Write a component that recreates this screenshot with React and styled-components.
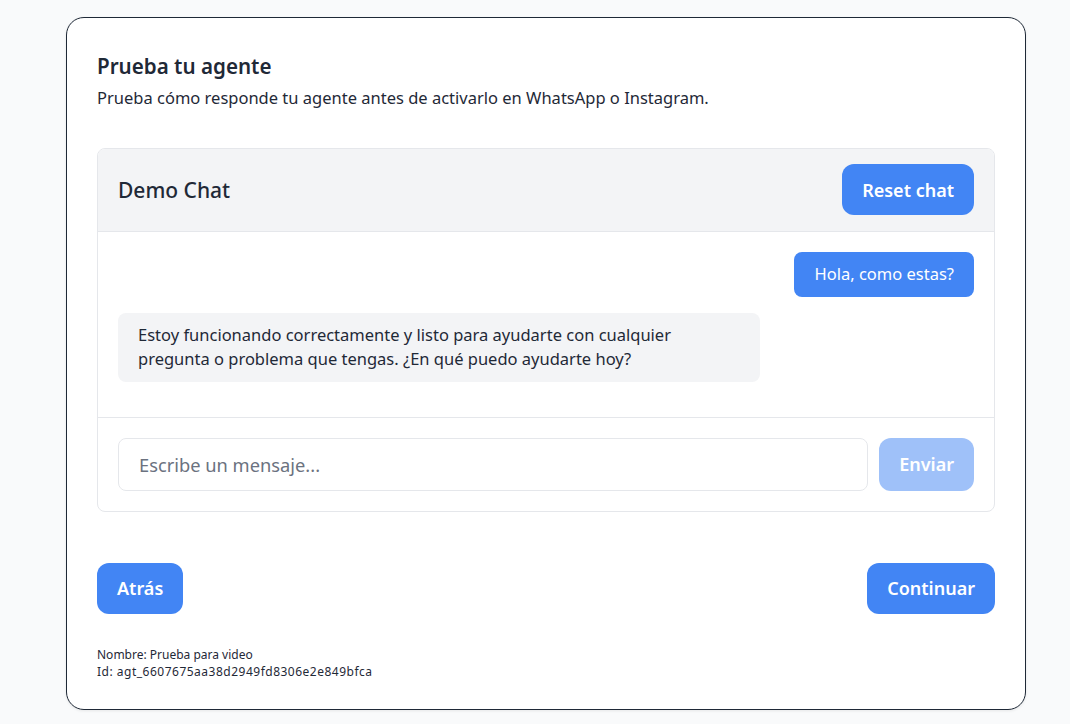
import React, { useState } from "react";
import styled, { createGlobalStyle } from "styled-components";

const Global = createGlobalStyle`
  html, body {
    margin: 0;
    padding: 0;
    background: #f9fafb;
    font-family: "Segoe UI", "Noto Sans", sans-serif;
    color: #1f2937;
  }
  * { box-sizing: border-box; }
`;

const Page = styled.div`
  padding: 17px 44px 14px 66px;
`;

const Card = styled.div`
  width: 960px;
  background: #fff;
  border: 1px solid #1f2937;
  border-radius: 18px;
  box-shadow: 0 1px 3px rgba(0, 0, 0, 0.08);
  padding: 30px 30px 29px;
`;

const Title = styled.h2`
  margin: 0;
  padding-top: 4px;
  font-size: 20.6px;
  font-weight: 600;
  line-height: 28px;
`;

const Subtitle = styled.p`
  margin: 6px 0 0;
  font-size: 16.5px;
  line-height: 24px;
`;

const ChatBox = styled.div`
  margin-top: 38px;
  border: 1px solid #e5e7eb;
  border-radius: 8px;
  overflow: hidden;
`;

const ChatHeader = styled.div`
  display: flex;
  justify-content: space-between;
  align-items: center;
  background: #f3f4f6;
  border-bottom: 1px solid #e5e7eb;
  padding: 15px 20px 16px;
`;

const ChatTitle = styled.h3`
  margin: 0;
  font-size: 21px;
  font-weight: 500;
`;

const Button = styled.button`
  border: none;
  border-radius: 12px;
  background: #4285f4;
  color: #fff;
  font-family: inherit;
  font-size: 18px;
  font-weight: 600;
  height: 51px;
  padding: 0 20px;
  cursor: pointer;
  opacity: ${(p) => (p.disabled ? 0.5 : 1)};
`;

const Messages = styled.div`
  display: flex;
  flex-direction: column;
  gap: 16px;
  padding: 20px 20px 35px;
`;

const Bubble = styled.div`
  align-self: ${(p) => (p.$mine ? "flex-end" : "flex-start")};
  max-width: 75%;
  background: ${(p) => (p.$mine ? "#4285f4" : "#f3f4f6")};
  color: ${(p) => (p.$mine ? "#fff" : "#1f2937")};
  border-radius: 8px;
  padding: 10px 20px;
  font-size: 16.5px;
  line-height: 24.5px;
`;

const InputRow = styled.div`
  display: flex;
  gap: 11px;
  border-top: 1px solid #e5e7eb;
  padding: 20px;
`;

const Input = styled.input`
  flex: 1;
  height: 53px;
  border: 1px solid #e5e7eb;
  border-radius: 8px;
  padding: 0 20px;
  font-family: inherit;
  font-size: 18.3px;
  color: #1f2937;
  outline: none;
  &::placeholder { color: #6b7280; }
`;

const SendButton = styled(Button)`
  height: 53px;
`;

const Footer = styled.div`
  display: flex;
  justify-content: space-between;
  margin-top: 51px;
`;

const Info = styled.div`
  margin-top: 32px;
  font-size: 12px;
  line-height: 17px;
`;

const InfoLine = styled.div`
  letter-spacing: ${(p) => p.$spacing || "0"};
`;

export default function App() {
  const [text, setText] = useState("");
  return (
    <>
      <Global />
      <Page>
        <Card>
          <Title>Prueba tu agente</Title>
          <Subtitle>Prueba cómo responde tu agente antes de activarlo en WhatsApp o Instagram.</Subtitle>
          <ChatBox>
            <ChatHeader>
              <ChatTitle>Demo Chat</ChatTitle>
              <Button>Reset chat</Button>
            </ChatHeader>
            <Messages>
              <Bubble $mine>Hola, como estas?</Bubble>
              <Bubble>
                Estoy funcionando correctamente y listo para ayudarte con cualquier pregunta o problema que tengas. ¿En qué puedo ayudarte hoy?
              </Bubble>
            </Messages>
            <InputRow>
              <Input
                placeholder="Escribe un mensaje..."
                value={text}
                onChange={(e) => setText(e.target.value)}
              />
              <SendButton disabled={!text}>Enviar</SendButton>
            </InputRow>
          </ChatBox>
          <Footer>
            <Button>Atrás</Button>
            <Button>Continuar</Button>
          </Footer>
          <Info>
            <InfoLine>Nombre: Prueba para video</InfoLine>
            <InfoLine $spacing="0.5px">Id: agt_6607675aa38d2949fd8306e2e849bfca</InfoLine>
          </Info>
        </Card>
      </Page>
    </>
  );
}
